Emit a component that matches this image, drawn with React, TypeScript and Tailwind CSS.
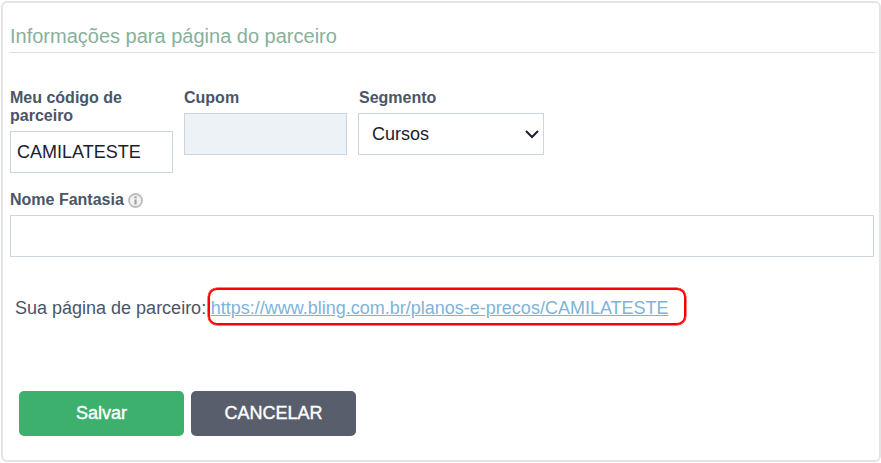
export default function App() {
  const label = "block text-[16px] leading-[18px] font-bold text-[#4a5568]";
  const field = "block h-[42px] border border-[#cbd5e0] bg-white text-[18px] text-[#1a202c] outline-none";
  return (
    <div className="w-[881px] h-[463px] bg-white pt-[1px] pl-[1px] font-['Liberation_Sans',Arial,sans-serif]">
      <div className="w-[880px] h-[461px] border-2 border-[#e4e4e4] rounded-[6px] bg-white pl-[7px] pr-[4px] pt-[19px]">
        <h2 className="h-[31px] border-b border-[#d9dde6] text-[20px] leading-[29px] font-normal text-[#88b09c]">
          Informações para página do parceiro
        </h2>
        <div className="flex items-start mt-[36px]">
          <div className="w-[163px]">
            <label className={label}>Meu código de parceiro</label>
            <input readOnly value="CAMILATESTE" className={`${field} w-[163px] px-[6px] mt-[6px]`} />
          </div>
          <div className="w-[163px] ml-[11px]">
            <label className={label}>Cupom</label>
            <div className="h-[42px] w-[163px] mt-[6px] border border-[#cbd5e0] bg-[#edf2f7]" />
          </div>
          <div className="w-[186px] ml-[11px]">
            <label className={`${label} pl-[1px]`}>Segmento</label>
            <div className="relative mt-[6px]">
              <select className={`${field} w-[186px] pl-[13px] pr-[30px] appearance-none`} defaultValue="Cursos">
                <option>Cursos</option>
              </select>
              <svg className="absolute right-[4px] top-[15px] pointer-events-none" width="16" height="12" viewBox="0 0 16 12" fill="none">
                <path d="M2 3 L8 9 L14 3" stroke="#1a202c" strokeWidth="2" />
              </svg>
            </div>
          </div>
        </div>
        <label className={`${label} flex items-center mt-[18px]`}>
          Nome Fantasia
          <svg className="ml-[4px] mt-[1px]" width="15" height="15" viewBox="0 0 15 15">
            <circle cx="7.5" cy="7.5" r="6.5" fill="#f2f2f2" stroke="#bdbdbd" strokeWidth="1.8" />
            <rect x="6.4" y="6.5" width="2.2" height="5" fill="#a3a3a3" />
            <rect x="6.4" y="3.3" width="2.2" height="2.1" fill="#a3a3a3" />
          </svg>
        </label>
        <input readOnly className={`${field} w-[864px] px-[6px] mt-[6px]`} />
        <div className="relative mt-[41px] ml-[5px] h-[20px] flex items-center text-[18px] leading-[20px] text-[#4a5568]">
          <span>Sua página de parceiro:</span>
          <a href="#" className="ml-[4.6px] underline text-[#7eb3d8]">https://www.bling.com.br/planos-e-precos/CAMILATESTE</a>
          <div className="absolute left-[192.5px] top-[-10.5px] w-[478px] h-[37px] border-2 border-[#ff0000] rounded-[9px] shadow-[0_0_0_0.5px_#ff0000]" />
        </div>
        <div className="flex gap-[7px] ml-[9px] mt-[73px]">
          <button className="w-[165px] h-[45px] rounded-[5px] bg-[#3eb06d] text-white text-[18px] [-webkit-text-stroke:0.4px_white]">Salvar</button>
          <button className="w-[165px] h-[45px] rounded-[5px] bg-[#585e6c] text-white text-[18px] [-webkit-text-stroke:0.4px_white]">CANCELAR</button>
        </div>
      </div>
    </div>
  );
}
